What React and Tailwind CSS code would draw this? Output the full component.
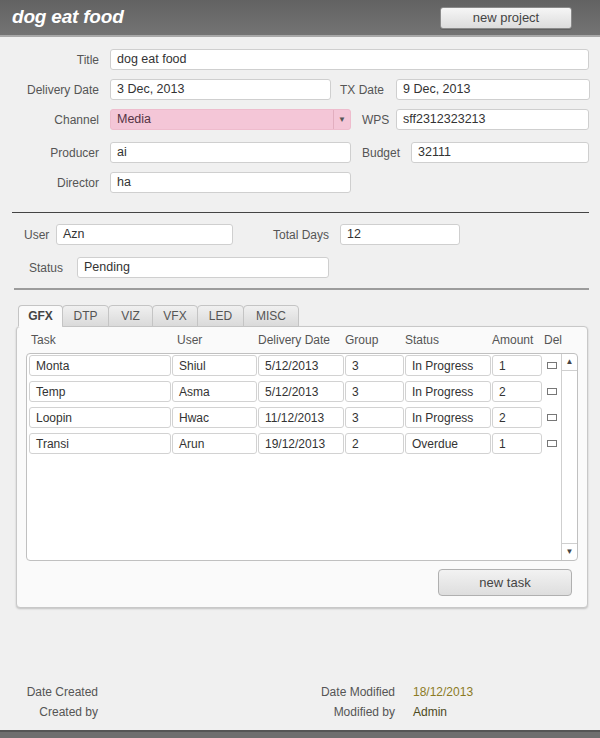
import React from 'react'

const font = { fontFamily: '"Liberation Sans", Arial, sans-serif' }

const Field = ({ value, className = '' }) => (
  <div className={`h-[21px] shrink-0 bg-white border border-[#cfcfcf] rounded-[3px] pl-[6px] flex items-center text-[12.5px] text-[#333] overflow-hidden whitespace-nowrap ${className}`}>
    {value}
  </div>
)

const Cell = ({ value, className = '' }) => (
  <div className={`h-[21px] shrink-0 bg-white border border-[#d2d2d2] rounded-[3px] pl-[6px] flex items-center text-[12px] text-[#333] overflow-hidden whitespace-nowrap ${className}`}>
    {value}
  </div>
)

const tasks = [
  { task: 'Monta', user: 'Shiul', date: '5/12/2013', group: '3', status: 'In Progress', amount: '1' },
  { task: 'Temp', user: 'Asma', date: '5/12/2013', group: '3', status: 'In Progress', amount: '2' },
  { task: 'Loopin', user: 'Hwac', date: '11/12/2013', group: '3', status: 'In Progress', amount: '2' },
  { task: 'Transi', user: 'Arun', date: '19/12/2013', group: '2', status: 'Overdue', amount: '1' },
]

const tabs = ['GFX', 'DTP', 'VIZ', 'VFX', 'LED', 'MISC']
const tabWidths = ['w-[45px]', 'w-[47px]', 'w-[45px]', 'w-[46px]', 'w-[47px]', 'w-[56px]']

export default function App() {
  return (
    <div style={font} className="w-[600px] h-[738px] bg-[#f0f0f0] flex flex-col text-[12px] text-[#555]">
      {/* header */}
      <div className="h-[37px] shrink-0 bg-gradient-to-b from-[#626262] to-[#747474] border-b-2 border-[#a8a8a8] flex items-center justify-between pl-[12px] pr-[28px]">
        <span className="text-[19px] font-bold italic text-white tracking-[-0.2px]">dog eat food</span>
        <button className="w-[132px] h-[22px] rounded-[3px] border border-[#8a8a8a] bg-gradient-to-b from-[#f6f6f6] to-[#dcdcdc] text-[13px] text-[#444] shadow-[0_1px_0_rgba(0,0,0,0.15)]">
          new project
        </button>
      </div>

      {/* project form */}
      <div className="pt-[12px]">
        <div className="flex items-center">
          <label className="w-[99px] text-right">Title</label>
          <Field value="dog eat food" className="ml-[11px] w-[479px]" />
        </div>
        <div className="flex items-center mt-[9px]">
          <label className="w-[99px] text-right">Delivery Date</label>
          <Field value="3 Dec, 2013" className="ml-[11px] w-[221px]" />
          <label className="ml-[9px] w-[56px]">TX Date</label>
          <Field value="9 Dec, 2013" className="w-[194px]" />
        </div>
        <div className="flex items-center mt-[9px]">
          <label className="w-[99px] text-right">Channel</label>
          <div className="ml-[11px] w-[241px] h-[21px] rounded-[3px] bg-[#f4c6d7] border border-[#eebccd] flex items-center text-[12.5px] text-[#553344]">
            <span className="flex-1 pl-[6px]">Media</span>
            <span className="w-[17px] h-full border-l border-[#e2aebf] flex items-center justify-center text-[8px] text-[#555]">▼</span>
          </div>
          <label className="ml-[11px] w-[34px]">WPS</label>
          <Field value="sff2312323213" className="w-[193px]" />
        </div>
        <div className="flex items-center mt-[12px]">
          <label className="w-[99px] text-right">Producer</label>
          <Field value="ai" className="ml-[11px] w-[241px]" />
          <label className="ml-[11px] w-[49px]">Budget</label>
          <Field value="32111" className="w-[178px]" />
        </div>
        <div className="flex items-center mt-[9px]">
          <label className="w-[99px] text-right">Director</label>
          <Field value="ha" className="ml-[11px] w-[241px]" />
        </div>
      </div>

      <div className="mt-[19px] ml-[12px] w-[577px] h-px bg-[#444]" />

      {/* user / status */}
      <div className="flex items-center mt-[11px] pl-[24px]">
        <label className="w-[32px]">User</label>
        <Field value="Azn" className="w-[177px]" />
        <label className="ml-[40px] w-[67px]">Total Days</label>
        <Field value="12" className="w-[120px]" />
      </div>
      <div className="flex items-center mt-[12px] pl-[29px]">
        <label className="w-[48px]">Status</label>
        <Field value="Pending" className="w-[252px]" />
      </div>

      <div className="mt-[10px] ml-[14px] w-[575px] h-[2px] bg-[#9c9c9c]" />

      {/* tabs */}
      <div className="mt-[15px] ml-[18px] flex h-[21px] relative z-10">
        {tabs.map((t, i) => (
          <div
            key={t}
            className={`${tabWidths[i]} h-[22px] flex items-center justify-center rounded-t-[4px] border border-[#c4c4c4] ${
              i === 0
                ? 'bg-[#fafafa] border-b-[#fafafa] font-bold text-[#444]'
                : 'bg-gradient-to-b from-[#f0f0f0] to-[#dadada] -ml-px text-[#555]'
            }`}
          >
            {t}
          </div>
        ))}
      </div>

      <div className="ml-[16px] w-[572px] h-[282px] bg-[#fafafa] border border-[#c8c8c8] rounded-[4px] shadow-[0_1px_2px_rgba(0,0,0,0.2)] flex flex-col">
        {/* column headers */}
        <div className="h-[26px] flex items-center pl-[12px] text-[12px] text-[#555] gap-[1px]">
          <span className="w-[142px] pl-[2px]">Task</span>
          <span className="w-[85px] pl-[5px]">User</span>
          <span className="w-[86px]">Delivery Date</span>
          <span className="w-[59px]">Group</span>
          <span className="w-[86px]">Status</span>
          <span className="w-[50px]">Amount</span>
          <span className="pl-[1px]">Del</span>
        </div>

        {/* task table */}
        <div className="ml-[9px] w-[552px] h-[208px] bg-white border border-[#c0c0c0] rounded-[4px] flex overflow-hidden">
          <div className="flex-1 flex flex-col gap-[5px] pt-[1px] pl-[2px]">
            {tasks.map((r, i) => (
              <div key={i} className="flex items-center gap-[1px]">
                <Cell value={r.task} className="w-[142px]" />
                <Cell value={r.user} className="w-[85px]" />
                <Cell value={r.date} className="w-[86px]" />
                <Cell value={r.group} className="w-[59px]" />
                <Cell value={r.status} className="w-[86px]" />
                <Cell value={r.amount} className="w-[50px]" />
                <div className="w-[18px] flex justify-center">
                  <div className="w-[10px] h-[7px] border border-[#777] bg-white" />
                </div>
              </div>
            ))}
          </div>
          <div className="w-[17px] border-l border-[#cfcfcf] flex flex-col justify-between">
            <div className="h-[17px] border-b border-[#cfcfcf] flex items-center justify-center text-[8px] text-[#444]">▲</div>
            <div className="h-[17px] border-t border-[#cfcfcf] flex items-center justify-center text-[8px] text-[#444]">▼</div>
          </div>
        </div>

        <div className="flex justify-end mt-[8px] pr-[15px]">
          <button className="w-[134px] h-[27px] rounded-[4px] border border-[#b0b0b0] bg-gradient-to-b from-[#f2f2f2] to-[#dedede] text-[13px] text-[#444]">
            new task
          </button>
        </div>
      </div>

      {/* footer info */}
      <div className="mt-[76px] flex text-[12px] leading-[16px] text-[#555]">
        <div className="w-[98px] flex flex-col items-end gap-[4px]">
          <span>Date Created</span>
          <span>Created by</span>
        </div>
        <div className="w-[297px] flex flex-col items-end gap-[4px]">
          <span>Date Modified</span>
          <span>Modified by</span>
        </div>
        <div className="ml-[18px] flex flex-col gap-[4px]">
          <span className="text-[#8c7b24]">18/12/2013</span>
          <span className="text-[#4d4a1c]">Admin</span>
        </div>
      </div>

      <div className="mt-auto h-[8px] bg-[#6e6e6e] border-t-2 border-[#555]" />
    </div>
  )
}
